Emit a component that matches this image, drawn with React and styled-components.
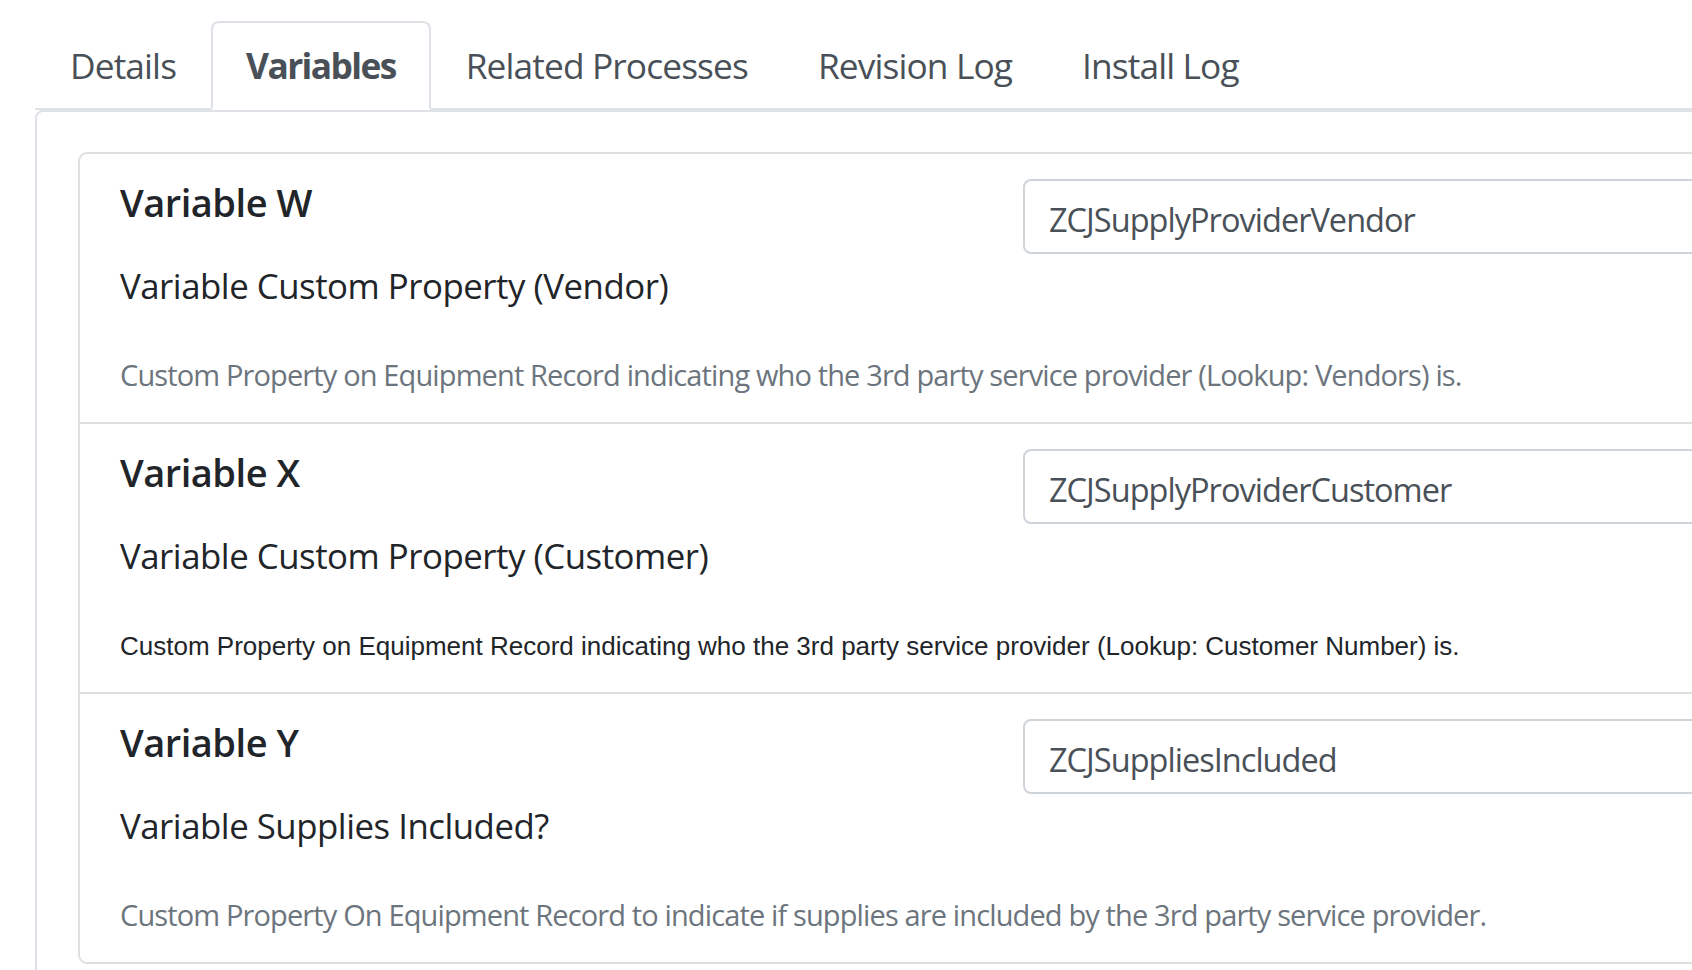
import React from "react";
import styled, { createGlobalStyle } from "styled-components";

const GlobalStyle = createGlobalStyle`
    * {
        box-sizing: border-box;
    }
    body {
        margin: 0;
        background: #fff;
        overflow: hidden;
        font-family: "Open Sans", "Noto Sans", sans-serif;
        letter-spacing: -0.03em;
    }
`;

const Page = styled.div`
    width: 2100px;
    padding: 21px 0 0 35px;
`;

const Nav = styled.div`
    display: flex;
    border-bottom: 2px solid #dee2e6;
`;

const Tab = styled.div`
    margin-bottom: -2px;
    padding: 14px 33px;
    line-height: 57px;
    font-size: 35.3px;
    color: #495057;
    font-weight: ${(p) => (p.$active ? 700 : 400)};
    letter-spacing: ${(p) => (p.$active ? "-0.045em" : "-0.025em")};
    border: 2px solid transparent;
    border-radius: 8px 8px 0 0;
    background: ${(p) => (p.$active ? "#fff" : "transparent")};
    border-color: ${(p) => (p.$active ? "#dee2e6 #dee2e6 #fff" : "transparent")};
    white-space: nowrap;
`;

const TabContent = styled.div`
    border: 2px solid #dee2e6;
    border-top-left-radius: 8px;
    padding: 40px 0 0 41px;
    height: 900px;
`;

const Card = styled.div`
    border: 2px solid #dfdfdf;
    border-radius: 9px;
`;

const Row = styled.div`
    padding: 23px 0 30px 40px;
    & + & {
        border-top: 2px solid #dfdfdf;
    }
`;

const Header = styled.div`
    display: flex;
    align-items: flex-start;
`;

const Title = styled.div`
    width: 903px;
    flex: none;
    font-size: 38px;
    line-height: 50px;
    font-weight: 600;
    color: #212529;
`;

const Field = styled.input`
    flex: 1;
    height: 75px;
    margin-top: 2px;
    padding: 5px 24px 0;
    border: 2px solid #ced4da;
    border-radius: 8px;
    font-family: "Open Sans", "Noto Sans", sans-serif;
    font-size: 32.5px;
    letter-spacing: -0.03em;
    color: #495057;
    background: #fff;
    outline: none;
`;

const Label = styled.div`
    margin-top: 10px;
    font-size: 34.8px;
    line-height: 44px;
    color: #212529;
`;

const Note = styled.div`
    margin-top: ${(p) => (p.$plain ? "52px" : "50px")};
    font-family: ${(p) => (p.$plain ? '"Liberation Sans", Arial, sans-serif' : '"Open Sans", "Noto Sans", sans-serif')};
    letter-spacing: ${(p) => (p.$plain ? "0" : "-0.03em")};
    font-size: ${(p) => (p.$plain ? "26px" : "29px")};
    line-height: ${(p) => (p.$plain ? "32px" : "34px")};
    color: ${(p) => (p.$plain ? "#212529" : "#6c757d")};
    white-space: nowrap;
`;

const tabs = ["Details", "Variables", "Related Processes", "Revision Log", "Install Log"];

const variables = [
    {
        name: "Variable W",
        value: "ZCJSupplyProviderVendor",
        label: "Variable Custom Property (Vendor)",
        note: "Custom Property on Equipment Record indicating who the 3rd party service provider (Lookup: Vendors) is.",
    },
    {
        name: "Variable X",
        value: "ZCJSupplyProviderCustomer",
        label: "Variable Custom Property (Customer)",
        note: "Custom Property on Equipment Record indicating who the 3rd party service provider (Lookup: Customer Number) is.",
        plain: true,
    },
    {
        name: "Variable Y",
        value: "ZCJSuppliesIncluded",
        label: "Variable Supplies Included?",
        note: "Custom Property On Equipment Record to indicate if supplies are included by the 3rd party service provider.",
    },
];

export default function App() {
    return (
        <>
            <GlobalStyle />
            <Page>
                <Nav>
                    {tabs.map((t) => (
                        <Tab key={t} $active={t === "Variables"}>{t}</Tab>
                    ))}
                </Nav>
                <TabContent>
                    <Card>
                        {variables.map((v) => (
                            <Row key={v.name}>
                                <Header>
                                    <Title>{v.name}</Title>
                                    <Field readOnly value={v.value} />
                                </Header>
                                <Label>{v.label}</Label>
                                <Note $plain={v.plain}>{v.note}</Note>
                            </Row>
                        ))}
                    </Card>
                </TabContent>
            </Page>
        </>
    );
}
